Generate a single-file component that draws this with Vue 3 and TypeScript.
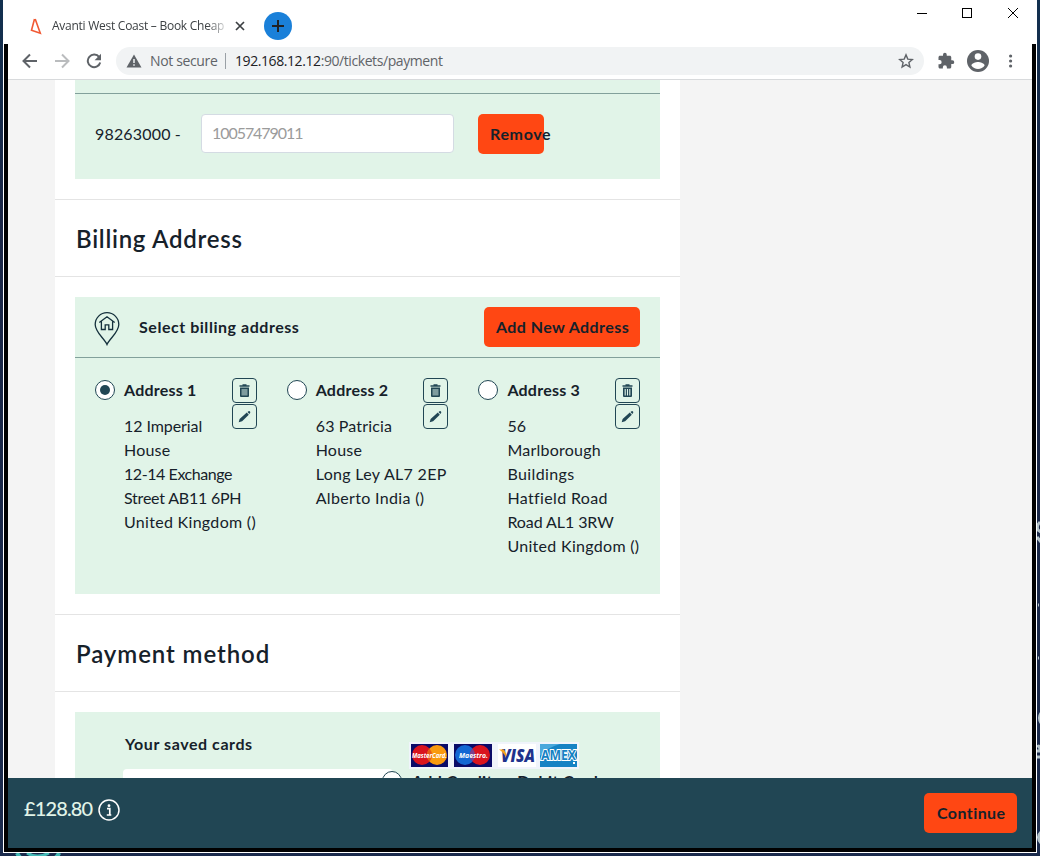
<script setup lang="ts">
interface Line {
  text: string
  tracking: number
}

interface Address {
  name: string
  lines: Line[]
  selected: boolean
}

const line = (text: string, tracking: number): Line => ({ text, tracking })

const addresses: Address[] = [
  {
    name: 'Address 1',
    lines: [
      line('12 Imperial', -0.08),
      line('House', 0.2),
      line('12-14 Exchange', -0.43),
      line('Street AB11 6PH', -0.22),
      line('United Kingdom ()', 0.3),
    ],
    selected: true,
  },
  {
    name: 'Address 2',
    lines: [
      line('63 Patricia', 0.15),
      line('House', 0.2),
      line('Long Ley AL7 2EP', 0.32),
      line('Alberto India ()', 0.33),
    ],
    selected: false,
  },
  {
    name: 'Address 3',
    lines: [
      line('56', 0),
      line('Marlborough', 0.24),
      line('Buildings', 0.38),
      line('Hatfield Road', 0.36),
      line('Road AL1 3RW', -0.08),
      line('United Kingdom ()', 0.3),
    ],
    selected: false,
  },
]
</script>

<template>
  <div class="desktop">
    <svg class="wallpaper" width="1040" height="856" viewBox="0 0 1040 856">
      <path d="M17 853q2 4 4 5h34q3-2 4-5" fill="none" stroke="#45b9b5" stroke-width="4" />
      <path d="M27 853q10 6 22 0" fill="none" stroke="#45b9b5" stroke-width="3" />
      <g fill="none" stroke="#b4c3ca" stroke-width="3">
        <path d="M1040 522q-4 4-2 8l3 2M1037 537l4 5M1038 605h1M1038 658h1M1041 713q-3 5 0 10M1037 747q3-3 3 4h-3M1037 757h3M1041 832q-5 5 0 11" />
      </g>
    </svg>
    <div class="window">
      <header class="tabs">
        <svg class="favicon" width="12" height="18" viewBox="0 0 12 18">
          <path d="M4.5 2L1.5 13.2L10.3 16.2L5.2 2" fill="none" stroke="#f15a35" stroke-width="1.6" />
        </svg>
        <span class="tab-title">Avanti West Coast – Book Cheap</span>
        <svg class="tab-close" width="10" height="10" viewBox="0 0 10 10">
          <path d="M1 1l8 8M9 1l-8 8" stroke="#3c4043" stroke-width="1.7" />
        </svg>
        <span class="new-tab">
          <svg width="12" height="12" viewBox="0 0 12 12">
            <path d="M6 0v12M0 6h12" stroke="#202124" stroke-width="2" />
          </svg>
        </span>
        <svg class="controls" width="104" height="12" viewBox="0 0 104 12" shape-rendering="crispEdges">
          <path d="M2 6.5h10" stroke="#000" />
          <rect x="47.5" y="1.5" width="9" height="9" fill="none" stroke="#000" />
          <path d="M93 1l10 10M103 1l-10 10" stroke="#000" shape-rendering="auto" />
        </svg>
      </header>

      <div class="toolbar">
        <svg class="nav" width="16" height="16" viewBox="0 0 16 16">
          <path d="M15 8H2M8 1.5L1.5 8L8 14.5" fill="none" stroke="#5f6368" stroke-width="2" />
        </svg>
        <svg class="nav" width="16" height="16" viewBox="0 0 16 16">
          <path d="M1 8h13M8 1.5L14.5 8L8 14.5" fill="none" stroke="#babcbe" stroke-width="2" />
        </svg>
        <svg class="nav" width="16" height="16" viewBox="0 0 16 16">
          <path d="M13.2 4.2A6.3 6.3 0 1 0 14.2 9.5" fill="none" stroke="#5f6368" stroke-width="2" />
          <path d="M15 .8v6.4H8.6z" fill="#5f6368" />
        </svg>
        <div class="omnibox">
          <svg width="16" height="14" viewBox="0 0 16 14">
            <path d="M8 .5L15.5 13.5H.5z" fill="#5f6368" />
            <path d="M8 5v4M8 10.2v1.6" stroke="#f1f3f4" stroke-width="1.5" />
          </svg>
          <span class="insecure">Not secure</span>
          <span class="rule"></span>
          <span class="url"><b>192.168.12.12</b>:90/tickets/payment</span>
          <svg class="star" width="16" height="16" viewBox="0 0 16 16">
            <path d="M8 1.9l1.8 4.2 4.5.4-3.4 3 1 4.5L8 11.6 4.1 14l1-4.5-3.4-3 4.5-.4z" fill="none" stroke="#5f6368" stroke-width="1.4" />
          </svg>
        </div>
        <svg class="puzzle" width="18" height="18" viewBox="0 0 24 24">
          <path d="M20.5 11H19V7c0-1.100-.9-2-2-2h-4V3.500a2.500 2.500 0 0 0-5 0V5H4c-1.100 0-2 .9-2 2v3.800h1.500a2.700 2.700 0 0 1 0 5.400H2V20c0 1.100.9 2 2 2h3.800v-1.500a2.700 2.700 0 0 1 5.400 0V22H17c1.100 0 2-.9 2-2v-4h1.500a2.500 2.500 0 0 0 0-5z" fill="#5f6368" />
        </svg>
        <svg class="avatar" width="22" height="22" viewBox="0 0 22 22">
          <circle cx="11" cy="11" r="11" fill="#5f6368" />
          <circle cx="11" cy="6.6" r="3.3" fill="#fff" />
          <path d="M4.400 15.400c0-2.200 4.400-3.500 6.600-3.500s6.600 1.300 6.600 3.500c-1.400 2.200-3.900 3.500-6.600 3.500s-5.200-1.300-6.600-3.500z" fill="#fff" />
        </svg>
        <svg class="dots" width="4" height="14" viewBox="0 0 4 14" fill="#5f6368">
          <circle cx="1.600" cy="2" r="1.600" /><circle cx="1.600" cy="7" r="1.600" /><circle cx="1.600" cy="12" r="1.600" />
        </svg>
      </div>

      <main class="viewport">
        <div class="card">
          <section class="panel voucher">
            <div class="voucher-row">
              <label class="prefix">98263000 -</label>
              <div class="field">10057479011</div>
              <div class="btn remove"><span>Remove</span></div>
            </div>
          </section>

          <h2 class="heading"><span class="t-billing">Billing Address</span></h2>

          <section class="panel billing">
            <div class="panel-head">
              <svg class="pin" width="26" height="34" viewBox="0 0 26 34" fill="none" stroke="#14303c" stroke-width="1.3">
                <path d="M13 32.500C10.500 26.500 1.200 20.500 1.200 12.500a11.800 11.800 0 0 1 23.600 0c0 8-9.300 14-11.800 20z" />
                <path d="M5.300 10.600L13 4.700l7.700 5.900M7.400 9.500v8h3.800v-4.700h3.600v4.700h3.800v-8" />
              </svg>
              <span class="t-select">Select billing address</span>
              <div class="btn add"><span>Add New Address</span></div>
            </div>
            <div class="addresses">
              <article v-for="(address, index) in addresses" :key="address.name" class="address">
                <span class="radio" :class="{ checked: address.selected }"></span>
                <div class="details">
                  <h3>{{ address.name }}</h3>
                  <p v-for="row in address.lines" :key="row.text" :style="{ letterSpacing: row.tracking + 'px' }">{{ row.text }}</p>
                </div>
                <div class="actions">
                  <span class="tool">
                    <svg width="13" height="14" viewBox="0 0 13 14">
                      <path d="M2 3.500h9V12q0 1-1 1H3q-1 0-1-1z" fill="#214654" />
                      <path v-if="index < 2" d="M3.500 5h6v6.500h-6z" fill="#7e9c9f" />
                      <path v-else d="M4.200 5v6.500M6.500 5v6.500M8.800 5v6.500" stroke="#e1f4e8" stroke-width="1.1" />
                      <path d="M1.500 2h10M4.500 1h4" stroke="#214654" stroke-width="1.3" />
                    </svg>
                  </span>
                  <span class="tool">
                    <svg width="13" height="13" viewBox="0 0 13 13">
                      <path d="M.7 12.300l.9-3.400 7.200-6.300 2 2.100-6.700 6.500zM9.500 2l1-.8q.9-.5 1.500.2t.1 1.600l-.8.900z" fill="#214654" />
                    </svg>
                  </span>
                </div>
              </article>
            </div>
          </section>

          <h2 class="heading"><span class="t-payment">Payment method</span></h2>

          <section class="panel payment">
            <div class="saved">
              <div class="t-saved">Your saved cards</div>
              <div class="select"></div>
            </div>
            <div class="new-card">
              <svg class="brands" width="170" height="27" viewBox="0 0 170 27">
                <rect width="170" height="27" fill="#f0f4fb" />
                <rect x="2" y="2" width="37" height="23" fill="#0b0b68" />
                <circle cx="13" cy="13" r="10" fill="#d9141e" />
                <circle cx="28" cy="13" r="10" fill="#f99a0e" />
                <path d="M20.500 6.400a10 10 0 0 1 0 13.200a10 10 0 0 1 0-13.200z" fill="#e55b17" />
                <text x="3" y="16" class="mc" textLength="35" lengthAdjust="spacingAndGlyphs">MasterCard.</text>
                <rect x="45" y="2" width="38" height="23" fill="#0b0b68" />
                <circle cx="56" cy="13" r="10" fill="#1467d3" />
                <circle cx="71" cy="13" r="10" fill="#d9141e" />
                <path d="M63.500 6.400a10 10 0 0 1 0 13.200a10 10 0 0 1 0-13.200z" fill="#7b408e" />
                <text x="50" y="16" class="mc" textLength="29" lengthAdjust="spacingAndGlyphs">Maestro.</text>
                <rect x="89" y="2" width="38" height="23" fill="#fff" />
                <text x="92" y="20" class="visa" textLength="34" lengthAdjust="spacingAndGlyphs">VISA</text>
                <path d="M90 7.500h5l2.500 5-1 2.500q-2-5-6.500-7.500z" fill="#f6a31b" />
                <rect x="131" y="2" width="37" height="23" fill="#1682c4" />
                <path d="M131 2h20q-12 3-20 12z" fill="#4aa8dc" />
                <text x="132" y="18" class="amex" textLength="35" lengthAdjust="spacingAndGlyphs">AMEX</text>
                <rect x="164" y="20" width="2" height="2" fill="#fff" />
              </svg>
              <div class="new-row">
                <span class="radio"></span>
                <span class="t-new">Add Credit or Debit Card</span>
              </div>
            </div>
          </section>
        </div>
      </main>

      <footer class="bar">
        <span class="total">£128.80</span>
        <svg class="info" width="22" height="22" viewBox="0 0 22 22">
          <circle cx="11" cy="11" r="10" fill="none" stroke="#fff" stroke-width="1.5" />
          <circle cx="11" cy="6.7" r="1.4" fill="#fff" />
          <path d="M9 9.700h2.800v6M8.800 16h4.500" fill="none" stroke="#fff" stroke-width="1.7" />
        </svg>
        <div class="btn continue"><span>Continue</span></div>
      </footer>
    </div>
  </div>
</template>

<style>
body {
  margin: 0;
  overflow: hidden;
}
</style>

<style scoped>
* {
  box-sizing: border-box;
}
.desktop {
  position: relative;
  width: 1040px;
  height: 856px;
  padding: 0 3px 3px;
  background: linear-gradient(#12304f, #1b2747 25%, #1a2a4c);
  font-family: Lato, 'Liberation Sans', sans-serif;
  font-size: 16px;
  color: #16212a;
  white-space: nowrap;
}
.wallpaper {
  position: absolute;
  inset: 0;
}
.window {
  position: relative;
  display: flex;
  flex-direction: column;
  height: 853px;
  background: #fff;
  padding: 0 1px 1px;
}
.tabs {
  display: flex;
  align-items: center;
  height: 44px;
  flex: none;
  padding: 8px 17px 0 26px;
}
.tab-title {
  width: 173px;
  margin-left: 10px;
  overflow: hidden;
  font: 12px/18px 'Open Sans', sans-serif;
  letter-spacing: -0.26px;
  color: #3c4043;
  -webkit-mask-image: linear-gradient(90deg, #000 155px, rgba(0, 0, 0, 0.2) 173px);
  mask-image: linear-gradient(90deg, #000 155px, rgba(0, 0, 0, 0.2) 173px);
}
.tab-close {
  margin-left: 10px;
}
.new-tab {
  display: grid;
  place-items: center;
  width: 28px;
  height: 28px;
  margin-left: 19px;
  border-radius: 50%;
  background: #1a80d9;
}
.controls {
  margin: -26px 0 0 auto;
}
.toolbar {
  display: flex;
  align-items: center;
  flex: none;
  height: 36px;
  padding: 0 19px 0 14px;
  border: solid #000;
  border-width: 0 4px;
  box-shadow: inset 0 -1px #d8dadc;
}
.nav {
  margin-right: 16px;
}
.nav:nth-child(3) {
  margin-right: 14px;
}
.omnibox {
  display: flex;
  align-items: center;
  width: 808px;
  height: 28px;
  margin-top: -2px;
  padding: 0 10px;
  border-radius: 14px;
  background: #f1f3f4;
  font: 14px/20px 'Open Sans', sans-serif;
  color: #5f6368;
}
.nav,
.puzzle,
.avatar,
.dots {
  position: relative;
  top: -1px;
  flex: none;
}
.insecure {
  width: 67px;
  margin-left: 8px;
  letter-spacing: -0.36px;
}
.rule {
  width: 1px;
  height: 16px;
  margin: 0 9px 0 8px;
  background: #9aa0a6;
}
.url {
  letter-spacing: -0.42px;
}
.url b {
  font-weight: 400;
  color: #202124;
}
.star {
  margin-left: auto;
}
.puzzle {
  margin-left: 13px;
}
.avatar {
  margin-left: 12px;
}
.dots {
  margin-left: 20px;
}
.viewport {
  height: 698px;
  flex: none;
  overflow: hidden;
  padding-left: 47px;
  background: #f4f4f4;
  border: solid #000;
  border-width: 0 4px;
}
.card {
  width: 625px;
  background: #fff;
}
.panel {
  margin: 0 20px;
  background: #e1f4e8;
}
.voucher {
  height: 99px;
  padding-top: 13px;
}
.voucher-row {
  display: flex;
  height: 86px;
  padding: 20px;
  border-top: 1px solid #82a09b;
}
.prefix {
  width: 106px;
  line-height: 40px;
  letter-spacing: 0.17px;
}
.field {
  width: 253px;
  height: 39px;
  padding-left: 10px;
  border: 1px solid #d4dbe3;
  border-radius: 4px;
  background: #fff;
  line-height: 36px;
  letter-spacing: -1.06px;
  color: #9b9b9b;
}
.btn {
  height: 40px;
  padding-left: 12px;
  border-radius: 5px;
  background: #ff4713;
  font-weight: 700;
  line-height: 40px;
  letter-spacing: 0.42px;
}
.remove {
  width: 66px;
  margin-left: 24px;
  line-height: 39px;
  letter-spacing: 0.65px;
}
.heading {
  height: 78px;
  margin: 20px 0;
  padding-left: 21px;
  border: solid #e4e4e4;
  border-width: 1px 0;
  font-size: 24px;
  font-weight: 600;
  line-height: 77px;
}
.t-billing {
  letter-spacing: 0.74px;
}
.t-payment {
  letter-spacing: 0.92px;
}
.billing {
  height: 297px;
}
.panel-head {
  display: flex;
  align-items: center;
  height: 61px;
  padding: 0 20px 0 19px;
  border-bottom: 1px solid #82a09b;
  font-weight: 700;
}
.pin {
  margin-top: 3px;
}
.t-select {
  margin: -2px 0 0 19px;
  letter-spacing: 0.54px;
}
.add {
  width: 156px;
  margin-left: auto;
}
.addresses {
  display: flex;
  justify-content: space-between;
  padding: 20px;
}
.address {
  display: flex;
  position: relative;
  width: 161.6px;
}
.radio {
  display: grid;
  place-items: center;
  flex: none;
  width: 20px;
  height: 20px;
  margin-top: 2px;
  border: 1px solid #214654;
  border-radius: 50%;
  background: #fff;
}
.checked::after {
  content: '';
  width: 10px;
  height: 10px;
  border-radius: 50%;
  background: #214654;
}
.details {
  margin-left: 9px;
}
.details h3 {
  margin: 0 0 12px;
  font-size: 16px;
  font-weight: 700;
  line-height: 24px;
  letter-spacing: 0.22px;
}
.details p {
  margin: 0;
  line-height: 24px;
}
.actions {
  position: absolute;
  right: 0;
  top: 0;
  display: grid;
  gap: 1px;
}
.tool {
  display: grid;
  place-items: center;
  width: 25px;
  height: 25px;
  border: 1px solid #214654;
  border-radius: 4px;
}
.payment {
  display: flex;
  height: 120px;
}
.saved {
  width: 307px;
  padding: 21px 0 0 48px;
}
.t-saved {
  padding-left: 2px;
  font-weight: 700;
  line-height: 22px;
  letter-spacing: 0.56px;
}
.select {
  height: 40px;
  width: 270px;
  margin-top: 14px;
  border-radius: 4px;
  background: #fff;
}
.new-card {
  padding-top: 30px;
}
.brands {
  display: block;
  margin-left: 27px;
}
.new-row {
  display: flex;
  gap: 10px;
  font-weight: 700;
  line-height: 24px;
}
.t-new {
  letter-spacing: 0.4px;
}
.mc {
  font: italic 700 7px 'Open Sans', sans-serif;
  fill: #fff;
}
.visa {
  font: italic 800 18px 'Open Sans', sans-serif;
  fill: #20328c;
}
.amex {
  font: 700 14px 'Open Sans', sans-serif;
  fill: #1682c4;
  stroke: #fff;
  stroke-width: 2px;
  paint-order: stroke;
}
.bar {
  display: flex;
  flex: none;
  height: 74px;
  padding: 15px 15px 0 15px;
  border: solid #000;
  border-width: 0 4px 4px;
  background: #214654;
}
.total {
  width: 69px;
  margin-left: 1px;
  font-size: 20px;
  font-weight: 500;
  line-height: 30px;
  letter-spacing: -0.85px;
  color: #e1f4e8;
}
.info {
  margin: 6px 0 0 5px;
}
.continue {
  width: 93px;
  margin-left: auto;
  padding-left: 13px;
}
</style>
